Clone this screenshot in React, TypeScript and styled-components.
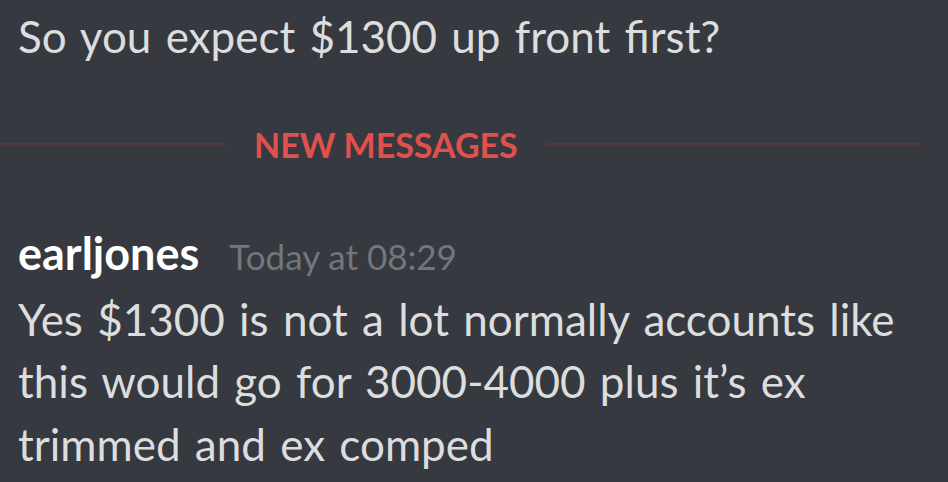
import styled, { createGlobalStyle } from "styled-components";

const GlobalStyle = createGlobalStyle`
  html, body {
    margin: 0;
    padding: 0;
    background: #36393f;
  }
  body {
    font-family: Lato, "Open Sans", sans-serif;
    overflow: hidden;
  }
`;

const Chat = styled.div`
  width: 948px;
  height: 482px;
  background: #36393f;
  display: flex;
  flex-direction: column;
  padding-top: 5px;
  box-sizing: border-box;
`;

const MessageText = styled.div<{ $gap?: number }>`
  color: #dcddde;
  font-size: 44px;
  line-height: 62.5px;
  word-spacing: 3px;
  padding: 0 30px 0 18px;
  margin-top: ${(p) => p.$gap ?? 0}px;
`;

const Divider = styled.div`
  display: flex;
  align-items: center;
  gap: 28px;
  padding-right: 27px;
  margin-top: 60px;
`;

const Rule = styled.div<{ $width?: number }>`
  height: 3px;
  background: #4f3b3e;
  ${(p) => (p.$width ? `width: ${p.$width}px;` : "flex: 1;")}
`;

const DividerLabel = styled.span`
  color: #e0504c;
  font-size: 34px;
  font-weight: 700;
  line-height: 34px;
  white-space: nowrap;
`;

const Header = styled.div`
  display: flex;
  align-items: baseline;
  gap: 30px;
  padding: 0 18px;
  line-height: 52px;
  margin-top: 65px;
`;

const Username = styled.span`
  color: #ffffff;
  font-size: 45px;
  font-weight: 700;
`;

const Timestamp = styled.span`
  color: #72767d;
  font-size: 35px;
`;

export default function App() {
  return (
    <Chat>
      <GlobalStyle />
      <MessageText>So you expect $1300 up front first?</MessageText>
      <Divider>
        <Rule $width={226} />
        <DividerLabel>NEW MESSAGES</DividerLabel>
        <Rule />
      </Divider>
      <Header>
        <Username>earljones</Username>
        <Timestamp>Today at 08:29</Timestamp>
      </Header>
      <MessageText $gap={6}>
        Yes $1300 is not a lot normally accounts like this would go for
        3000-4000 plus it’s ex trimmed and ex comped
      </MessageText>
    </Chat>
  );
}
